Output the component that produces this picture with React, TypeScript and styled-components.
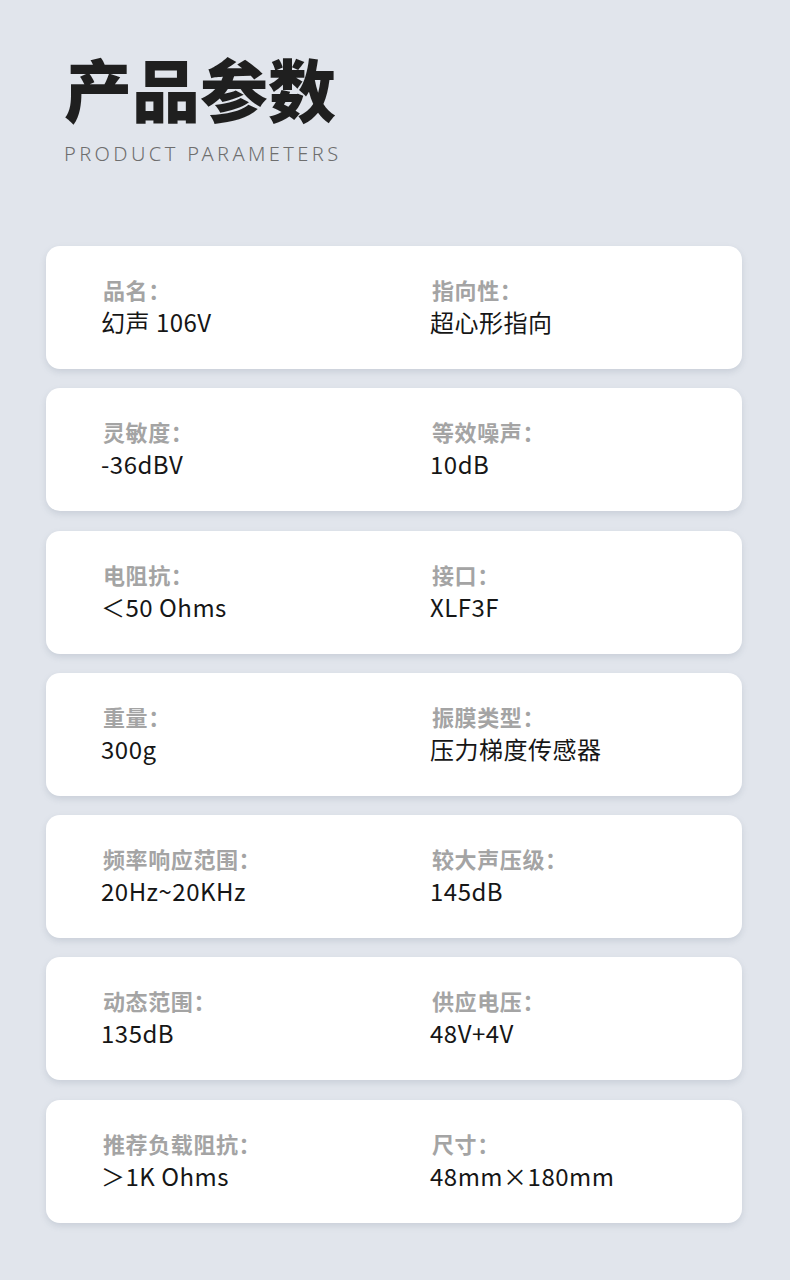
import React from 'react'
import styled, { createGlobalStyle } from 'styled-components'

const GlobalStyle = createGlobalStyle`
    html, body {
        margin: 0;
        padding: 0;
        background: #e1e5ec;
    }
    body {
        font-family: "Noto Sans CJK SC", "Noto Sans", sans-serif;
    }
`

const Pagina = styled.div`
    width: 790px;
    min-height: 1280px;
    box-sizing: border-box;
    padding: 50px 48px 0 46px;
    background: #e1e5ec;
`

const Cabecalho = styled.header`
    padding-left: 18px;
    height: 196px;
`

const Titulo = styled.h1`
    margin: 0;
    font-size: 68px;
    line-height: 76px;
    font-weight: 900;
    color: #1f1f1f;
`

const Subtitulo = styled.p`
    margin: 16px 0 0;
    font-family: "Noto Sans", "Liberation Sans", sans-serif;
    font-size: 20px;
    line-height: 24px;
    font-weight: 300;
    letter-spacing: 3.4px;
    color: #6e6e6e;
`

const Lista = styled.div`
    display: flex;
    flex-direction: column;
    gap: 19.3px;
`

const Card = styled.div`
    width: 696px;
    height: 123px;
    box-sizing: border-box;
    padding: 30px 0 0 57px;
    background: #fff;
    border-radius: 14px;
    box-shadow: 0px 3px 6px 0px rgba(120, 130, 150, 0.22);
    display: grid;
    grid-template-columns: 329px 1fr;
    align-items: start;
`

const Campo = styled.div`
    display: flex;
    flex-direction: column;
`

const Rotulo = styled.span`
    font-size: 22px;
    line-height: 26px;
    font-weight: 700;
    letter-spacing: 0.6px;
    color: #a4a4a4;
`

const Valor = styled.span`
    margin: 6px 0 0 -2px;
    font-size: 24px;
    line-height: 28px;
    font-weight: 400;
    letter-spacing: 0.5px;
    color: #161616;
`

const parametros: [string, string, string, string][] = [
    ['品名：', '幻声 106V', '指向性：', '超心形指向'],
    ['灵敏度：', '-36dBV', '等效噪声：', '10dB'],
    ['电阻抗：', '＜50 Ohms', '接口：', 'XLF3F'],
    ['重量：', '300g', '振膜类型：', '压力梯度传感器'],
    ['频率响应范围：', '20Hz~20KHz', '较大声压级：', '145dB'],
    ['动态范围：', '135dB', '供应电压：', '48V+4V'],
    ['推荐负载阻抗：', '＞1K Ohms', '尺寸：', '48mm×180mm'],
]

export default function App() {
    return (
        <>
            <GlobalStyle />
            <Pagina>
                <Cabecalho>
                    <Titulo>产品参数</Titulo>
                    <Subtitulo>PRODUCT PARAMETERS</Subtitulo>
                </Cabecalho>
                <Lista>
                    {parametros.map(([r1, v1, r2, v2]) => (
                        <Card key={r1}>
                            <Campo>
                                <Rotulo>{r1}</Rotulo>
                                <Valor>{v1}</Valor>
                            </Campo>
                            <Campo>
                                <Rotulo>{r2}</Rotulo>
                                <Valor>{v2}</Valor>
                            </Campo>
                        </Card>
                    ))}
                </Lista>
            </Pagina>
        </>
    )
}
